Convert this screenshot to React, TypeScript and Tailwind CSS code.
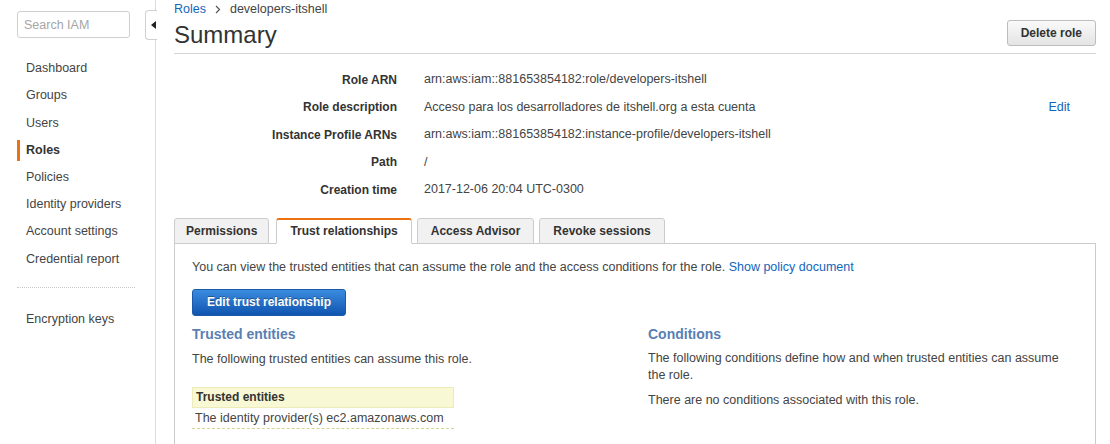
import React from "react";

const navItems = [
  "Dashboard",
  "Groups",
  "Users",
  "Roles",
  "Policies",
  "Identity providers",
  "Account settings",
  "Credential report",
];

const details: [string, string][] = [
  ["Role ARN", "arn:aws:iam::881653854182:role/developers-itshell"],
  ["Role description", "Acceso para los desarrolladores de itshell.org a esta cuenta"],
  ["Instance Profile ARNs", "arn:aws:iam::881653854182:instance-profile/developers-itshell"],
  ["Path", "/"],
  ["Creation time", "2017-12-06 20:04 UTC-0300"],
];

const tabs = ["Permissions", "Trust relationships", "Access Advisor", "Revoke sessions"];

function Sidebar() {
  return (
    <aside className="relative w-[156px] shrink-0 border-r border-[#dcdcdc] h-full">
      <div className="pt-[11px] pl-[17px]">
        <input
          placeholder="Search IAM"
          className="w-[113px] h-[27px] rounded-[3px] border border-[#cfcfcf] px-[6px] text-[12.5px] text-[#444] placeholder:text-[#a6a6a6] outline-none"
        />
      </div>
      {/* collapse tab sits over the border */}
      <div className="absolute left-[145px] top-[10px] w-[12px] h-[30px] bg-white border border-r-0 border-[#d0d0d0] rounded-l-[4px] flex items-center justify-end pr-[1px]">
        <div className="w-0 h-0 border-y-[4px] border-y-transparent border-r-[5px] border-r-[#222]" />
      </div>

      <ul className="mt-[17px]">
        {navItems.map((item) => (
          <li key={item} className="py-[3.1px] pl-[17px]">
            <a
              className={
                "flex items-center h-[21px] pl-[6px] border-l-[3px] text-[12.5px] " +
                (item === "Roles"
                  ? "border-[#ec7211] font-bold text-[#333]"
                  : "border-transparent text-[#444]")
              }
            >
              {item}
            </a>
          </li>
        ))}
      </ul>
      <div className="ml-[17px] w-[118px] mt-[14px] border-t border-dotted border-[#c8c8c8]" />
      <ul className="mt-[18px]">
        <li className="py-[3px] pl-[17px]">
          <a className="flex items-center h-[21px] pl-[6px] border-l-[3px] border-transparent text-[12.5px] text-[#444]">
            Encryption keys
          </a>
        </li>
      </ul>
    </aside>
  );
}

function TrustTab() {
  return (
    <div className="border border-[#cccccc] border-b-0 px-[17px] pt-[14px] h-[220px]">
      <p className="text-[12.5px] leading-[18px] text-[#444]">
        You can view the trusted entities that can assume the role and the access conditions for the role.{" "}
        <a className="text-[#1166bb]">Show policy document</a>
      </p>
      <button className="mt-[13px] h-[27px] px-[14px] rounded-[3px] border border-[#1a5aa8] bg-gradient-to-b from-[#3a8ce0] to-[#0f55b0] text-white text-[12px] font-bold [text-shadow:0_-1px_0_rgba(0,0,0,0.35)]">
        Edit trust relationship
      </button>
      <div className="grid grid-cols-[456px_1fr] mt-[9px]">
        <div>
          <h3 className="text-[14px] leading-[18px] font-bold text-[#5a7fb3]">Trusted entities</h3>
          <p className="mt-[7px] text-[12.5px] leading-[18px] text-[#444]">
            The following trusted entities can assume this role.
          </p>
          <div className="mt-[19px] w-[262px]">
            <div className="h-[21px] flex items-center px-[3px] bg-[#f8f8d4] border border-[#ececbb] text-[12px] font-bold text-[#333]">
              Trusted entities
            </div>
            <div className="h-[21px] pt-[2px] flex items-center px-[3px] border-b border-dashed border-[#d2d29a] text-[12.5px] text-[#444]">
              The identity provider(s) ec2.amazonaws.com
            </div>
          </div>
        </div>
        <div className="pr-[18px]">
          <h3 className="text-[14px] leading-[18px] font-bold text-[#5a7fb3]">Conditions</h3>
          <p className="mt-[7px] text-[12.5px] leading-[17px] text-[#444] max-w-[420px]">
            The following conditions define how and when trusted entities can assume the role.
          </p>
          <p className="mt-[7px] text-[12.5px] leading-[18px] text-[#444]">
            There are no conditions associated with this role.
          </p>
        </div>
      </div>
    </div>
  );
}

export default function App() {
  return (
    <div className="flex w-[1110px] h-[444px] overflow-hidden bg-white font-['Liberation_Sans',Arial,sans-serif] text-[#444]">
      <Sidebar />
      <main className="flex-1 pl-[18px] pr-[14px]">
        <div className="h-[19px] flex items-center text-[12.5px]">
          <a className="text-[#1166bb]">Roles</a>
          <svg className="mx-[9px]" width="6" height="9" viewBox="0 0 6 9" fill="none">
            <path d="M1 1l3.5 3.5L1 8" stroke="#555" strokeWidth="1.2" />
          </svg>
          <span className="text-[#444]">developers-itshell</span>
        </div>
        <div className="flex items-start justify-between h-[35px] border-b border-[#d5d5d5]">
          <h1 className="mt-[2px] text-[24px] leading-[28px] text-[#333]">Summary</h1>
          <button className="mt-[1px] h-[26px] px-[13px] rounded-[3px] border border-[#bdbdbd] bg-gradient-to-b from-[#fafafa] to-[#e4e4e4] text-[12px] font-bold text-[#333]">
            Delete role
          </button>
        </div>

        <div className="grid grid-cols-[223px_1fr] gap-x-[27px] mt-[12px]">
          {details.map(([label, value]) => (
            <React.Fragment key={label}>
              <div className="h-[27.5px] flex items-center justify-end text-[12px] font-bold text-[#333]">
                {label}
              </div>
              <div className="h-[27.5px] flex items-center justify-between text-[12.5px] text-[#444]">
                <span>{value}</span>
                {label === "Role description" && (
                  <a className="text-[#1166bb] mr-[26px] text-[12.5px]">Edit</a>
                )}
              </div>
            </React.Fragment>
          ))}
        </div>

        <div className="flex items-end gap-[5px] mt-[14px] h-[26px] -mb-px relative">
          {tabs.map((t) => {
            const active = t === "Trust relationships";
            return (
              <div
                key={t}
                className={
                  "h-[26px] flex items-center rounded-t-[3px] text-[12px] font-bold text-[#333] border " +
                  (active
                    ? "bg-white border-[#cccccc] border-t-[2px] border-t-[#ec7211] border-b-white ml-[2px] px-[13px]"
                    : t === "Permissions"
                    ? "bg-[#f1f1f1] border-[#cccccc] px-[11px]"
                    : "bg-[#f1f1f1] border-[#cccccc] px-[13px]")
                }
              >
                {t}
              </div>
            );
          })}
        </div>
        <TrustTab />
      </main>
    </div>
  );
}
